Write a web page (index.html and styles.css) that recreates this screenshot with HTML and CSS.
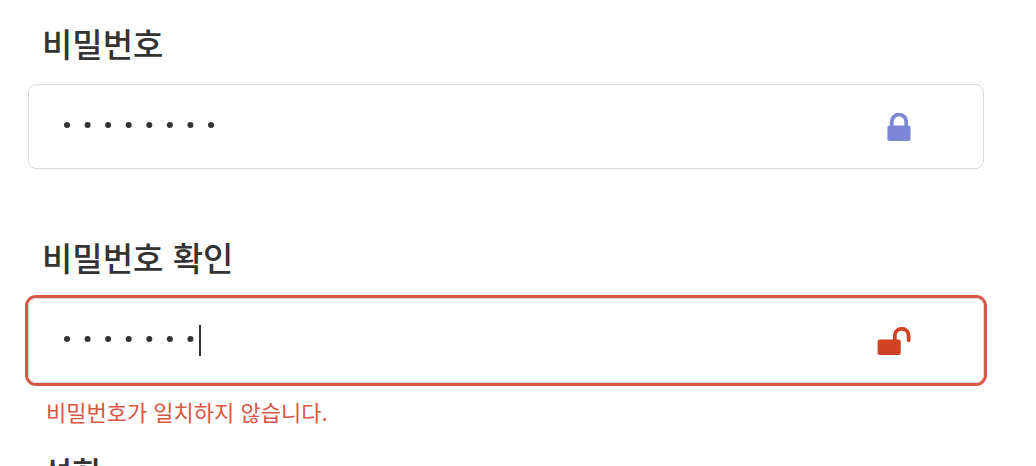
FILE: index.html
```html
<!DOCTYPE html>
<html lang="ko">
<head>
<meta charset="utf-8">
<title>비밀번호</title>
<link rel="stylesheet" href="styles.css">
</head>
<body>
<form class="form">
  <div class="field">
    <label class="label" for="password">비밀번호</label>
    <div class="control">
      <input class="input input-masked" id="password" type="password" value="12345678">
      <svg class="dots" viewBox="0 0 151 6" aria-hidden="true">
        <path d="M3 3h0M23.6 3h0M44.1 3h0M64.7 3h0M85.3 3h0M105.9 3h0M126.4 3h0M147 3h0"/>
      </svg>
      <svg class="icon icon-locked" viewBox="0 0 24 29" aria-hidden="true">
        <path d="M4.5 14V9a7.5 7.5 0 0 1 15 0v5" fill="none" stroke="currentColor" stroke-width="3.9"/>
        <rect x="0" y="13" width="24" height="16" rx="2.2" fill="currentColor"/>
      </svg>
    </div>
  </div>
  <div class="field">
    <label class="label" for="confirm">비밀번호 확인</label>
    <div class="control control-error">
      <input class="input input-masked" id="confirm" type="password" value="1234567" aria-invalid="true" aria-describedby="confirm-error">
      <svg class="dots" viewBox="0 0 151 6" aria-hidden="true">
        <path d="M3 3h0M23.6 3h0M44.1 3h0M64.7 3h0M85.3 3h0M105.9 3h0M126.4 3h0"/>
      </svg>
      <span class="caret"></span>
      <svg class="icon icon-open" viewBox="0 0 34 29" aria-hidden="true">
        <path d="M17.8 14V9a7.2 7.2 0 0 1 14.4 0v4.8" fill="none" stroke="currentColor" stroke-width="3.9" stroke-linecap="round"/>
        <rect x="0" y="13" width="24" height="16" rx="2.2" fill="currentColor"/>
      </svg>
    </div>
    <p class="error" id="confirm-error">비밀번호가 일치하지 않습니다.</p>
  </div>
  <div class="field field-name">
    <label class="label" for="name">성함</label>
    <div class="control"><input class="input" id="name" type="text"></div>
  </div>
</form>
</body>
</html>
```
FILE: styles.css
```css
* {
  box-sizing: border-box;
}

body {
  margin: 0;
  background: #fff;
  color: #333;
  font-family: "Noto Sans CJK KR", sans-serif;
  overflow: hidden;
}

.form {
  padding: 20px 52px 20px 28px;
}

.field {
  display: flex;
  flex-direction: column;
  margin-bottom: 65px;
}

.label {
  margin: 0 0 18px 14px;
  font-size: 33px;
  font-weight: 500;
  line-height: 46px;
}

.control {
  position: relative;
  display: flex;
  align-items: center;
  height: 85px;
  padding: 0 72px 0 35px;
  border: 1px solid #dadada;
  border-radius: 8px;
}

.control-error {
  box-shadow: 0 0 0 3px #d85646;
}

.input {
  flex: 1;
  min-width: 0;
  padding: 0;
  border: 0;
  outline: 0;
  background: transparent;
  color: #333;
  font-family: "Noto Sans CJK KR", sans-serif;
  font-size: 22px;
}

.input-masked {
  color: transparent;
}

/* Widely spaced mask dots drawn over the field's own text */
.dots {
  position: absolute;
  top: 37px;
  left: 35px;
  width: 151px;
  height: 6px;
  overflow: visible;
  fill: none;
  stroke: #333;
  stroke-width: 6px;
  stroke-linecap: round;
  pointer-events: none;
}

.caret {
  position: absolute;
  left: 170px;
  width: 2px;
  height: 31px;
  background: #333;
}

.icon {
  height: 28px;
}

.icon-locked {
  width: 24px;
  color: #7b87d4;
}

.icon-open {
  width: 34px;
  color: #cf4222;
}

.error {
  margin: 12px 0 0 18px;
  color: #d85646;
  font-size: 22px;
  line-height: 32px;
}

.field:has(.error) {
  margin-bottom: 22px;
}
```
